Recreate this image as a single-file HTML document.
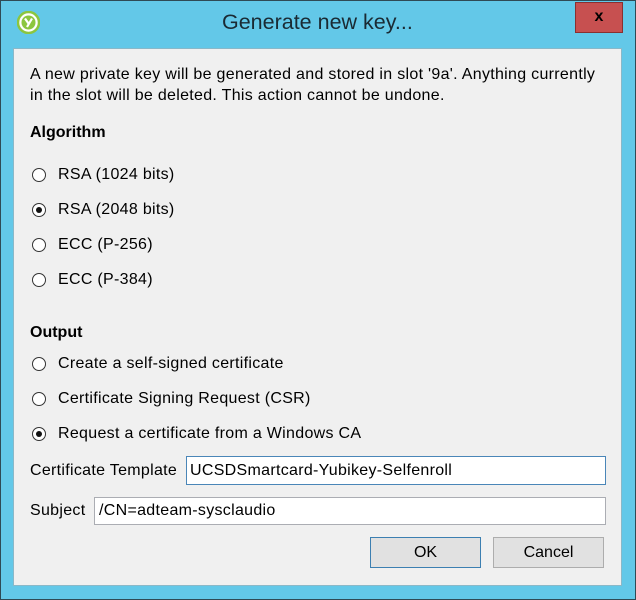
<!DOCTYPE html>
<html><head><style>
body{margin:0;width:636px;height:600px;background:#62c7e7;font-family:"Liberation Sans",sans-serif;position:relative;overflow:hidden;color:#000}
.frame{position:absolute;left:0;top:0;width:634px;height:598px;border:1px solid #2f4a55;background:#63c8e8}
.client{position:absolute;left:13px;top:48px;width:609px;height:538px;background:#f0f0f0;border:1px solid #8ab8c8;box-sizing:border-box}
.t{position:absolute;font-size:16px;letter-spacing:0.3px;white-space:nowrap}
.b{font-weight:bold;letter-spacing:0}
.r{position:absolute;width:14px;height:14px;border:1px solid #333;border-radius:50%;background:#fff;box-sizing:border-box}
.r.on::after{content:"";position:absolute;left:3px;top:3px;width:6px;height:6px;border-radius:50%;background:#111}
.in{position:absolute;background:#fff;border:1px solid #abadb3;box-sizing:border-box;font-size:16px;letter-spacing:0.3px;padding:5px 4px;white-space:nowrap}
.btn{position:absolute;background:#e1e1e1;border:1px solid #adadad;box-sizing:border-box;font-size:16px;text-align:center;line-height:30px}
</style></head><body>
<div class="frame"></div>
<svg style="position:absolute;left:17px;top:11px" width="23" height="23"><circle cx="11.5" cy="11.5" r="10.5" fill="#fff" stroke="#8cc63f" stroke-width="2.5"/><circle cx="11.5" cy="11.5" r="7" fill="#8cc63f"/><path d="M8 7.5 L11.5 12.5 M15 7.5 L10 16" stroke="#fff" stroke-width="2.2" fill="none"/></svg>
<div class="t" style="left:222px;top:10px;font-size:21.5px;letter-spacing:0;color:#1a2a33">Generate new key...</div>
<div style="position:absolute;left:575px;top:2px;width:48px;height:31px;background:#c75050;border:1px solid #8a3030;box-sizing:border-box;text-align:center;font-weight:bold;font-size:16px;line-height:28px">x</div>
<div class="client"></div>
<div class="t" style="left:30px;top:66px">A new private key will be generated and stored in slot '9a'. Anything currently</div>
<div class="t" style="left:30px;top:87px">in the slot will be deleted. This action cannot be undone.</div>
<div class="t b" style="left:30px;top:124px">Algorithm</div>
<div class="r" style="left:32px;top:168px"></div><div class="t" style="left:58px;top:166px">RSA (1024 bits)</div>
<div class="r on" style="left:32px;top:203px"></div><div class="t" style="left:58px;top:201px">RSA (2048 bits)</div>
<div class="r" style="left:32px;top:238px"></div><div class="t" style="left:58px;top:236px">ECC (P-256)</div>
<div class="r" style="left:32px;top:273px"></div><div class="t" style="left:58px;top:271px">ECC (P-384)</div>
<div class="t b" style="left:30px;top:324px">Output</div>
<div class="r" style="left:32px;top:357px"></div><div class="t" style="left:58px;top:355px">Create a self-signed certificate</div>
<div class="r" style="left:32px;top:392px"></div><div class="t" style="left:58px;top:390px">Certificate Signing Request (CSR)</div>
<div class="r on" style="left:32px;top:427px"></div><div class="t" style="left:58px;top:425px">Request a certificate from a Windows CA</div>
<div class="t" style="left:30px;top:462px">Certificate Template</div>
<div class="in" style="left:186px;top:456px;width:420px;height:29px;border-color:#4a86b8;padding-left:3px">UCSDSmartcard-Yubikey-Selfenroll</div>
<div class="t" style="left:30px;top:502px">Subject</div>
<div class="in" style="left:94px;top:497px;width:512px;height:28px;padding-top:4px;padding-left:4px">/CN=adteam-sysclaudio</div>
<div class="btn" style="left:370px;top:537px;width:111px;height:31px;border-color:#3c7fb1">OK</div>
<div class="btn" style="left:493px;top:537px;width:111px;height:31px">Cancel</div>
</body></html>
